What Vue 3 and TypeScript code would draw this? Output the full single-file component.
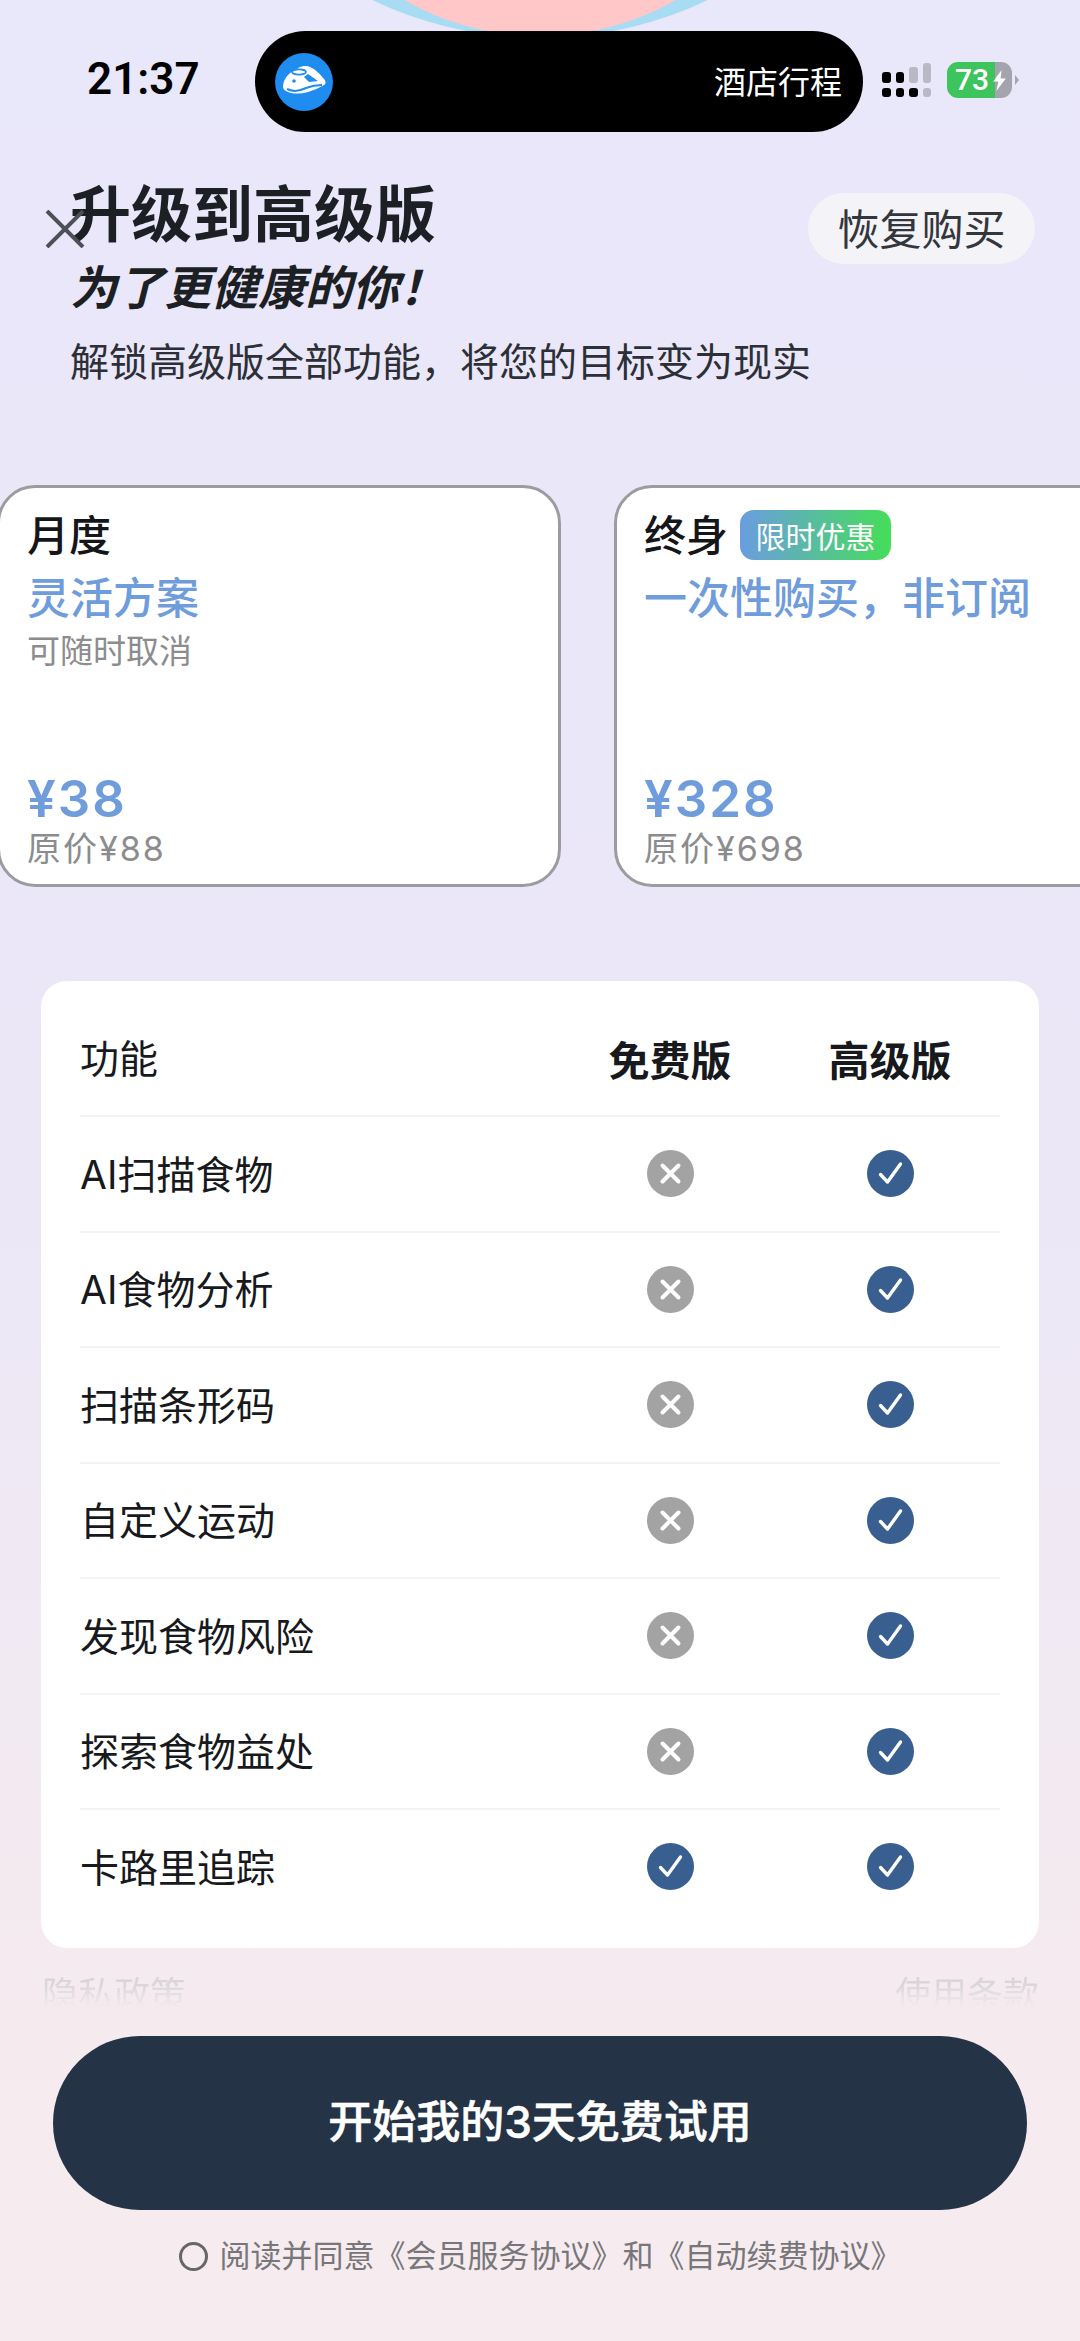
<script setup lang="ts">
interface Feature {
  name: string
  free: boolean
}

interface Plan {
  name: string
  badge?: string
  tagline: string
  note?: string
  price: string
  original: string
}

const plans: Plan[] = [
  { name: '月度', tagline: '灵活方案', note: '可随时取消', price: '¥38', original: '原价¥88' },
  { name: '终身', badge: '限时优惠', tagline: '一次性购买，非订阅', price: '¥328', original: '原价¥698' }
]

const features: Feature[] = [
  { name: 'AI扫描食物', free: false },
  { name: 'AI食物分析', free: false },
  { name: '扫描条形码', free: false },
  { name: '自定义运动', free: false },
  { name: '发现食物风险', free: false },
  { name: '探索食物益处', free: false },
  { name: '卡路里追踪', free: true }
]

const signalBars = ['short', 'short', 'mid', 'tall']
</script>

<template>
  <div class="page">
    <div class="blob blob-blue" />
    <div class="blob blob-pink" />

    <div class="status">
      <span class="time">21:37</span>
      <div class="island">
        <span class="island-logo">
          <svg viewBox="0 0 58 58" width="58" height="58">
            <path
              d="M8 34c0-8 6-15 14-18 3-3 9-4 13-2 5 2 10 7 14 12 2 2 2 5 0 6-5 3-10 5-16 7-7 2-14 2-20 0-3-1-5-3-5-5z"
              fill="#fff"
            />
            <path d="M33 21l10 7-9 1-5-5z" fill="#1f8cf0" />
            <path d="M12 36c6 3 13 2 19-1 5-2 10-3 16-3" fill="none" stroke="#1f8cf0" stroke-width="2" />
            <ellipse cx="24" cy="19" rx="7" ry="2.6" fill="none" stroke="#1f8cf0" stroke-width="1.6" />
            <circle cx="19" cy="28" r="1.8" fill="#1f8cf0" />
          </svg>
        </span>
        <span class="island-text">酒店行程</span>
      </div>
      <div class="signal">
        <span v-for="(bar, i) in signalBars" :key="i" class="signal-col">
          <i class="signal-top" :class="bar" />
          <i class="signal-dot" :class="{ dim: i === 3 }" />
        </span>
      </div>
      <div class="battery">
        <span class="battery-fill">73</span>
        <span class="battery-rest" />
        <svg class="battery-bolt" viewBox="0 0 14 20" width="15" height="21">
          <path d="M9 0L1 11h5l-2 9 9-12H8z" fill="#fff" />
        </svg>
        <i class="battery-cap" />
      </div>
    </div>

    <header class="header">
      <div class="header-top">
        <div>
          <h1 class="title">升级到高级版</h1>
          <p class="subtitle">为了更健康的你！</p>
        </div>
        <button class="restore">恢复购买</button>
      </div>
      <p class="desc">解锁高级版全部功能，将您的目标变为现实</p>
      <svg class="close" viewBox="0 0 40 38" width="40" height="38">
        <path d="M2 1l36 36M38 1L2 37" stroke="#4c5057" stroke-width="4" fill="none" />
      </svg>
    </header>

    <section class="plans">
      <div v-for="plan in plans" :key="plan.name" class="plan">
        <div class="plan-head">
          <span class="plan-name">{{ plan.name }}</span>
          <span v-if="plan.badge" class="plan-badge">{{ plan.badge }}</span>
        </div>
        <div class="plan-tagline">{{ plan.tagline }}</div>
        <div v-if="plan.note" class="plan-note">{{ plan.note }}</div>
        <div class="plan-bottom">
          <div class="plan-price">{{ plan.price }}</div>
          <div class="plan-original">{{ plan.original }}</div>
        </div>
      </div>
    </section>

    <section class="table">
      <div class="row row-head">
        <span class="cell-name">功能</span>
        <span class="cell-col col-title">免费版</span>
        <span class="cell-col col-title">高级版</span>
      </div>
      <div v-for="item in features" :key="item.name" class="row">
        <span class="cell-name">{{ item.name }}</span>
        <span class="cell-col">
          <svg viewBox="0 0 47 47" width="47" height="47">
            <template v-if="item.free">
              <circle cx="23.5" cy="23.5" r="23.5" fill="#385f8f" />
              <path d="M13.5 24.5l7 7.5 13-18" fill="none" stroke="#fff" stroke-width="3.4" stroke-linecap="round" stroke-linejoin="round" />
            </template>
            <template v-else>
              <circle cx="23.5" cy="23.5" r="23.5" fill="#a3a3a3" />
              <path d="M15.5 15.5l16 16M31.5 15.5l-16 16" fill="none" stroke="#fff" stroke-width="4" stroke-linecap="round" />
            </template>
          </svg>
        </span>
        <span class="cell-col">
          <svg viewBox="0 0 47 47" width="47" height="47">
            <circle cx="23.5" cy="23.5" r="23.5" fill="#385f8f" />
            <path d="M13.5 24.5l7 7.5 13-18" fill="none" stroke="#fff" stroke-width="3.4" stroke-linecap="round" stroke-linejoin="round" />
          </svg>
        </span>
      </div>
    </section>

    <div class="legal">
      <span>隐私政策</span>
      <span>使用条款</span>
    </div>

    <button class="cta">开始我的3天免费试用</button>

    <div class="agree">
      <i class="agree-radio" />
      <span>阅读并同意《会员服务协议》和《自动续费协议》</span>
    </div>
  </div>
</template>

<style>
html,
body {
  margin: 0;
  padding: 0;
}
</style>

<style scoped>
.page {
  position: relative;
  width: 1080px;
  height: 2341px;
  overflow: hidden;
  display: flex;
  flex-direction: column;
  background: linear-gradient(180deg, #e9e7fa 0%, #ebe7f7 50%, #f6ebee 90%, #f6ebee 100%);
  font-family: Inter, 'Noto Sans CJK SC', sans-serif;
  color: #1c1f24;
}

.blob {
  position: absolute;
  border-radius: 50%;
}

.blob-blue {
  left: 151px;
  top: -740px;
  width: 778px;
  height: 778px;
  background: #a8dcf3;
}

.blob-pink {
  left: 266px;
  top: -512px;
  width: 548px;
  height: 548px;
  background: #ffc7c7;
}

.status {
  position: relative;
  display: flex;
  align-items: center;
  height: 101px;
  margin-top: 31px;
  padding-left: 87px;
}

.time {
  width: 168px;
  margin-top: -6px;
  font-family: Roboto, sans-serif;
  font-size: 44px;
  font-weight: 600;
  color: #000;
}

.island {
  display: flex;
  align-items: center;
  justify-content: space-between;
  width: 608px;
  height: 101px;
  padding: 0 21px 0 20px;
  box-sizing: border-box;
  border-radius: 51px;
  background: #000;
}

.island-logo {
  display: flex;
  width: 58px;
  height: 58px;
  border-radius: 50%;
  background: #1f8cf0;
}

.island-text {
  font-size: 32px;
  color: #fff;
  margin-top: -3px;
}

.signal {
  display: flex;
  gap: 5px;
  margin-left: 19px;
  margin-top: -3px;
}

.signal-col {
  display: flex;
  flex-direction: column;
  justify-content: flex-end;
  gap: 5px;
  width: 8.5px;
  height: 34px;
}

.signal-top {
  display: block;
  border-radius: 3px;
}

.signal-top.short {
  height: 11px;
  background: #000;
}

.signal-top.mid {
  height: 16px;
  background: #b9b9c6;
}

.signal-top.tall {
  height: 20px;
  background: #b9b9c6;
}

.signal-dot {
  display: block;
  height: 9px;
  border-radius: 3px;
  background: #000;
}

.signal-dot.dim {
  background: #b9b9c6;
}

.battery {
  position: relative;
  display: flex;
  width: 65px;
  height: 36px;
  margin-left: 16px;
  margin-top: -3px;
}

.battery-fill {
  width: 48px;
  padding-left: 8px;
  box-sizing: border-box;
  border-radius: 11px 0 0 11px;
  background: #3dc45c;
  color: #fff;
  font-family: Roboto, sans-serif;
  font-size: 30px;
  font-weight: 500;
  line-height: 36px;
}

.battery-rest {
  flex: 1;
  border-radius: 0 11px 11px 0;
  background: #a5a4ae;
}

.battery-bolt {
  position: absolute;
  left: 45px;
  top: 8px;
}

.battery-cap {
  position: absolute;
  right: -7px;
  top: 13px;
  width: 0;
  height: 0;
  border-top: 5px solid transparent;
  border-bottom: 5px solid transparent;
  border-left: 4px solid #a5a4ae;
}

.header {
  position: relative;
  margin-top: 48px;
  padding: 0 45px 0 70px;
}

.header-top {
  display: flex;
  justify-content: space-between;
  align-items: flex-start;
}

.title {
  margin: 0;
  font-size: 61px;
  line-height: 70px;
  font-weight: 700;
}

.subtitle {
  margin: 8px 0 0;
  font-size: 47px;
  line-height: 60px;
  font-weight: 700;
  font-style: italic;
}

.desc {
  margin: 19px 0 0;
  font-size: 39px;
  line-height: 50px;
  color: #2c2f35;
}

.restore {
  margin-top: 13px;
  width: 227px;
  height: 71px;
  padding: 0 0 4px;
  border: 0;
  border-radius: 36px;
  background: #f3f3f8;
  font-family: inherit;
  font-size: 42px;
  color: #33363b;
}

.close {
  position: absolute;
  left: 45px;
  top: 30px;
}

.plans {
  display: flex;
  gap: 53px;
  margin-top: 98px;
  margin-left: -3px;
}

.plan {
  flex: 0 0 auto;
  display: flex;
  flex-direction: column;
  width: 564px;
  height: 402px;
  padding: 16px 27px 13px;
  box-sizing: border-box;
  border: 3px solid #9c9ca0;
  border-radius: 38px;
  background: #fff;
}

.plan-head {
  display: flex;
  align-items: center;
  gap: 12px;
  height: 56px;
}

.plan-name {
  font-size: 42px;
  font-weight: 500;
  color: #14161a;
}

.plan-badge {
  display: flex;
  align-items: center;
  justify-content: center;
  width: 151px;
  height: 50px;
  margin-top: 6px;
  border-radius: 14px;
  background: linear-gradient(90deg, #6a9de0, #45de59);
  font-size: 30px;
  color: #fff;
}

.plan-tagline {
  margin-top: 10px;
  font-size: 43px;
  line-height: 56px;
  font-weight: 500;
  color: #6f9cdb;
}

.plan-note {
  margin-top: 4px;
  font-size: 33px;
  line-height: 42px;
  color: #8c8c8e;
}

.plan-bottom {
  margin-top: auto;
}

.plan-price {
  font-size: 51px;
  line-height: 56px;
  font-weight: 600;
  color: #6f9cdb;
  letter-spacing: 2px;
}

.plan-original {
  font-size: 34px;
  line-height: 44px;
  color: #8c8c8e;
  letter-spacing: 2px;
}

.table {
  display: flex;
  flex-direction: column;
  width: 998px;
  height: 967px;
  margin-top: 94px;
  margin-left: 41px;
  padding: 0 39px;
  box-sizing: border-box;
  border-radius: 26px;
  background: #fff;
}

.row {
  display: grid;
  grid-template-columns: 1fr 220px 220px;
  align-items: center;
  height: 115.5px;
  flex: 0 0 auto;
  border-top: 2px solid #f3f3f4;
  box-sizing: border-box;
  font-size: 39px;
  color: #17191d;
}

.row-head {
  height: 134px;
  padding-top: 19px;
  border-top: 0;
}

.cell-name {
  padding-bottom: 4px;
}

.cell-col {
  display: flex;
  justify-content: center;
}

.col-title {
  font-size: 41px;
  font-weight: 700;
}

.legal {
  display: flex;
  justify-content: space-between;
  height: 38px;
  margin: 21px 41px 0 42px;
  overflow: hidden;
  font-size: 36px;
  line-height: 52px;
  color: #d8d6da;
  -webkit-mask-image: linear-gradient(180deg, #000 40%, transparent 100%);
  mask-image: linear-gradient(180deg, #000 40%, transparent 100%);
}

.cta {
  flex: 0 0 auto;
  width: 974px;
  height: 174px;
  margin: 29px 0 0 53px;
  padding: 0 0 8px;
  border: 0;
  border-radius: 87px;
  background: #253347;
  font-family: inherit;
  font-size: 44px;
  font-weight: 500;
  -webkit-text-stroke: 0.6px #fff;
  color: #fff;
}

.agree {
  display: flex;
  align-items: center;
  justify-content: center;
  gap: 12px;
  margin-top: 26px;
  font-size: 31px;
  line-height: 40px;
  color: #77767a;
}

.agree-radio {
  width: 29px;
  height: 29px;
  border: 3px solid #666;
  border-radius: 50%;
  box-sizing: border-box;
}
</style>
